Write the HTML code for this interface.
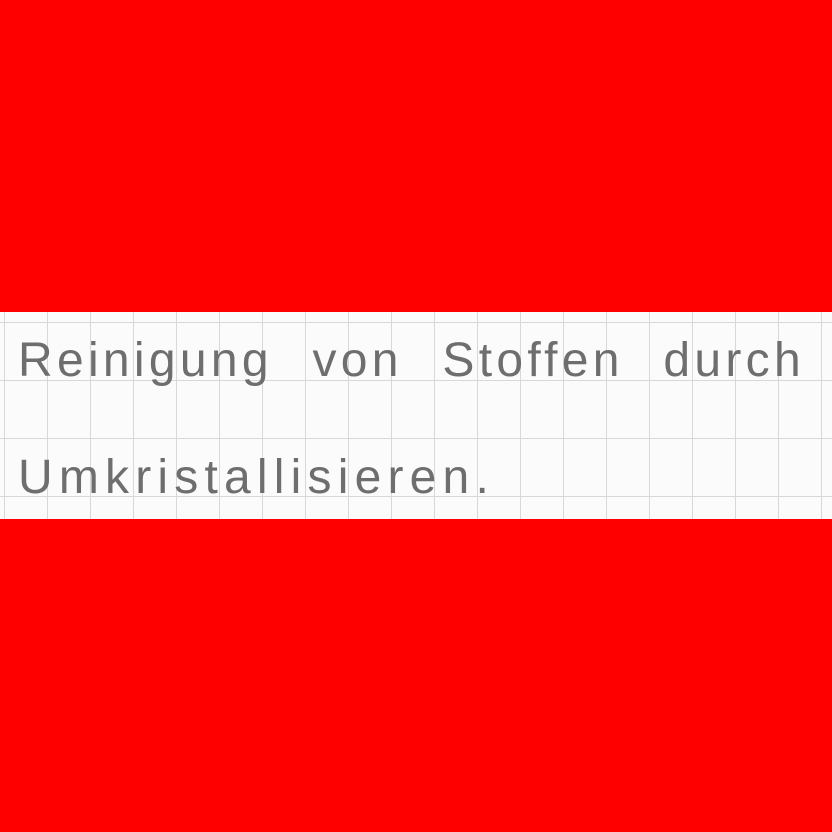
<!DOCTYPE html>
<html><head><style>
html,body{margin:0;padding:0;width:832px;height:832px;background:#ff0000;overflow:hidden}
.strip{position:absolute;left:0;top:312px;width:832px;height:207px;background-color:#fbfbfb;
background-image:linear-gradient(to right,#d8d8d8 1px,transparent 1px),linear-gradient(to bottom,#d8d8d8 1px,transparent 1px);
background-size:43px 58px;background-position:4px 10px}
.t{position:absolute;font-family:"Liberation Sans",sans-serif;color:#6e6e6e;white-space:nowrap;font-size:48px;font-weight:normal}
</style></head><body>
<div class="strip"></div>
<div class="t" style="left:18px;top:333px;letter-spacing:4.3px;word-spacing:22px">Reinigung von Stoffen durch</div>
<div class="t" style="left:18px;top:450px;letter-spacing:6.2px">Umkristallisieren.</div>
</body></html>
